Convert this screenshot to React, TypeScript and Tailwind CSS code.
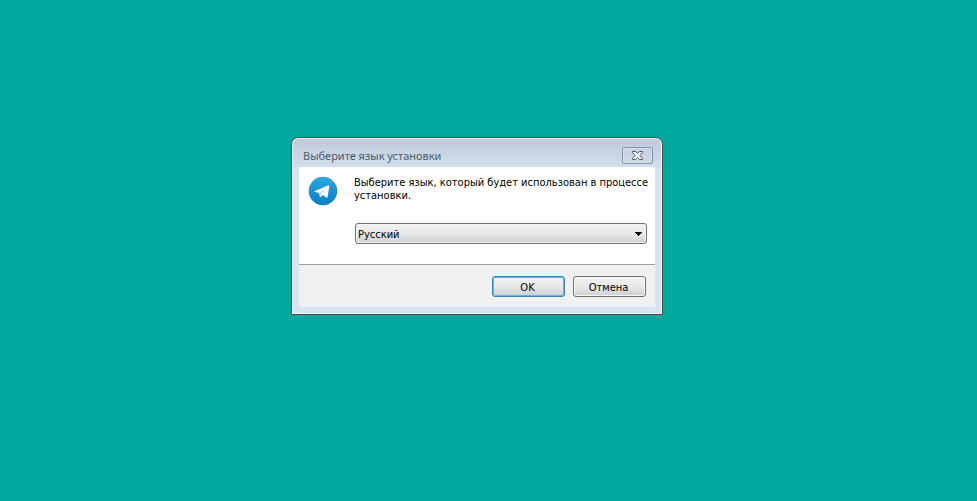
import React from "react";

function TelegramIcon() {
  return (
    <svg className="size-[30px] shrink-0" viewBox="0 0 30 30" aria-hidden="true">
      <defs>
        <linearGradient id="disc" x1="0" y1="0" x2="0" y2="1">
          <stop offset="0" stopColor="#2fa8e0" />
          <stop offset="1" stopColor="#0b7cc0" />
        </linearGradient>
      </defs>
      <circle cx="15" cy="15" r="14.3" fill="url(#disc)" />
      <path d="M6.5 15.2 20.4 9.3q1-.3.9.8l-1.7 11q-.3 1.2-1.4.5l-3.4-2.6-2.1 1.9q-.7.5-.9-.3l-.8-3.7-4.4-1.2q-.8-.2-.1-.5z" fill="#fff" />
      <path d="m11.5 16.8 6.3-4.4-4.4 5.3-.8 2.8z" fill="#c3def0" />
    </svg>
  );
}

function CloseGlyph() {
  return (
    <svg className="h-[9px] w-[11px]" viewBox="0 0 11 9" aria-hidden="true">
      <path
        d="M.5.5h3.2l1.8 2 1.8-2h3.2v1L7.8 4.5l2.7 3v1H7.3l-1.8-2-1.8 2H.5v-1l2.7-3-2.7-3z"
        fill="#f5f7f9"
        stroke="#50555f"
        strokeWidth="1"
      />
    </svg>
  );
}

const buttonBase =
  "h-[21px] w-[73px] rounded-[3px] border bg-linear-to-b from-[#f3f3f3] from-0% via-[#e8e8e8] via-50% to-[#cfcfcf] to-100% pt-[2px] pr-[2px] text-center leading-none";

export default function App() {
  return (
    <main className="flex min-h-screen items-center justify-center bg-[#00a99d] pr-[23px] pb-[49px]">
      <section
        role="dialog"
        aria-labelledby="dialog-title"
        className="w-[372px] rounded-t-[7px] border border-[#474d50] bg-[#d7e4f2] bg-linear-to-b from-[#bccad9] from-0% to-[#d7e4f2] to-[36px] px-[7px] pb-[7px] shadow-[inset_0_0_0_1px_#edf3f9]"
      >
        <header className="flex h-[29px] items-start justify-between pt-[9px] pr-[2px] pl-1">
          <h1
            id="dialog-title"
            className="font-['Noto_Sans','Open_Sans',sans-serif] text-[11px] leading-[18px] text-[#505b68]"
          >
            Выберите язык установки
          </h1>
          <button
            type="button"
            aria-label="Закрыть"
            className="flex h-[17px] w-[31px] items-center justify-center rounded-[2px] border border-[#8693ab] bg-linear-to-b from-[#c4d1df] to-[#cddae8] shadow-[inset_0_0_0_1px_#d5e0eb]"
          >
            <CloseGlyph />
          </button>
        </header>
        <form
          onSubmit={(e) => e.preventDefault()}
          className="font-['DejaVu_Sans_Condensed','DejaVu_Sans',sans-serif] text-[11px] leading-[13px] text-black"
        >
          <div className="flex gap-4 bg-white pt-[9px] pr-2 pb-5 pl-[9px]">
            <TelegramIcon />
            <div className="flex min-w-0 grow flex-col gap-5">
              <label htmlFor="language" className="h-[27px] whitespace-nowrap">
                Выберите язык, который будет использован в процессе
                <br />
                установки.
              </label>
              <div className="relative ml-px">
                <select
                  id="language"
                  defaultValue="ru"
                  className="block h-[21px] w-full appearance-none rounded-[3px] border border-[#707070] bg-linear-to-b from-[#f3f3f3] from-0% via-[#e8e8e8] via-50% to-[#cfcfcf] to-100% pt-[2px] pl-[2px] shadow-[inset_0_0_0_1px_#f4f4f4]"
                >
                  <option value="ru">Русский</option>
                </select>
                <svg
                  className="pointer-events-none absolute top-[9px] right-[5px] h-1 w-[7px]"
                  viewBox="0 0 7 4"
                  shapeRendering="crispEdges"
                  aria-hidden="true"
                >
                  <path d="M0 0h7v1H6v1H5v1H4v1H3V3H2V2H1V1H0z" />
                </svg>
              </div>
            </div>
          </div>
          <footer className="flex justify-end gap-2 border-t border-[#a0a0a0] bg-[#f0f0f0] pt-[11px] pr-[9px] pb-[10px]">
            <button type="submit" className={`${buttonBase} border-[#3c7fb1] shadow-[inset_0_0_0_1px_#3cc8f4]`}>
              OK
            </button>
            <button type="button" className={`${buttonBase} border-[#707070] shadow-[inset_0_0_0_1px_#f7f7f7]`}>
              Отмена
            </button>
          </footer>
        </form>
      </section>
    </main>
  );
}
